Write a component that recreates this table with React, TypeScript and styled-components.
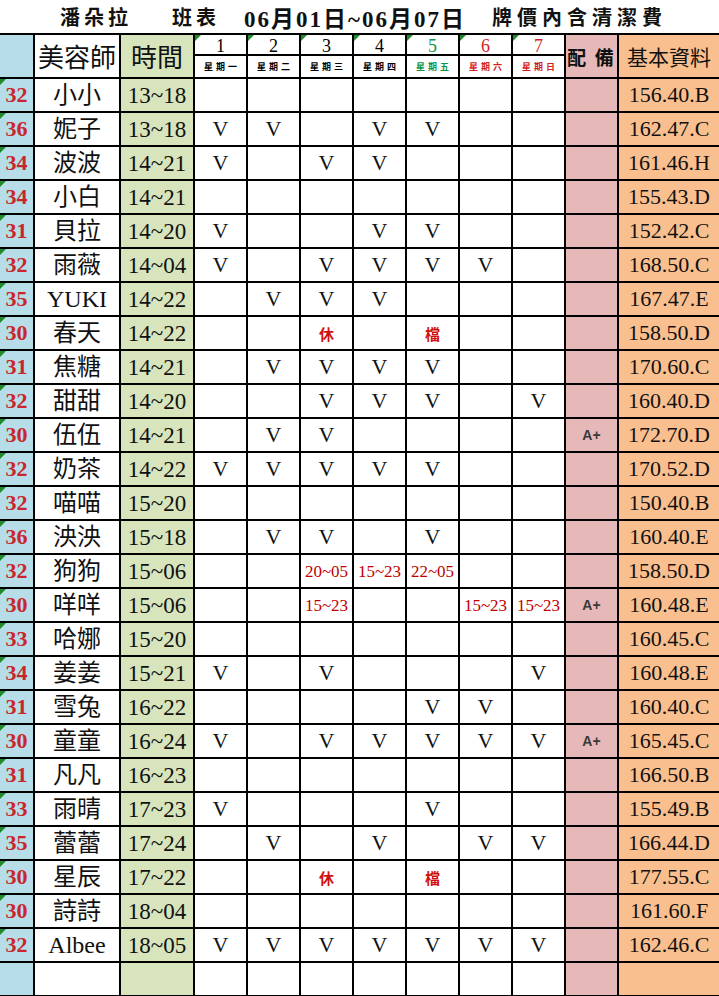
import styled, { createGlobalStyle } from 'styled-components'

const GlobalStyle = createGlobalStyle`
  body {
    margin: 0;
    background: #fff;
  }
`

const SERIF = `"Liberation Serif", "Noto Sans CJK TC", serif`
const CJK = `"Noto Sans CJK TC", sans-serif`

const BLUE = '#b7dee8'
const GREEN = '#d7e4bc'
const PINK = '#e6b9b8'
const ORANGE = '#fabf8f'
const RED = '#c8262c'

type Staff = {
  num: string
  name: string
  time: string
  days: string[]
  equip?: string
  info: string
}

const dayHeads = [
  { n: '1', w: '星期一', c: '#000' },
  { n: '2', w: '星期二', c: '#000' },
  { n: '3', w: '星期三', c: '#000' },
  { n: '4', w: '星期四', c: '#000' },
  { n: '5', w: '星期五', c: '#0b9443' },
  { n: '6', w: '星期六', c: '#d41f1f' },
  { n: '7', w: '星期日', c: '#d41f1f' },
]

const d = (s: string) => s.split(',')

const staff: Staff[] = [
  { num: '32', name: '小小', time: '13~18', days: d(',,,,,,'), info: '156.40.B' },
  { num: '36', name: '妮子', time: '13~18', days: d('V,V,,V,V,,'), info: '162.47.C' },
  { num: '34', name: '波波', time: '14~21', days: d('V,,V,V,,,'), info: '161.46.H' },
  { num: '34', name: '小白', time: '14~21', days: d(',,,,,,'), info: '155.43.D' },
  { num: '31', name: '貝拉', time: '14~20', days: d('V,,,V,V,,'), info: '152.42.C' },
  { num: '32', name: '雨薇', time: '14~04', days: d('V,,V,V,V,V,'), info: '168.50.C' },
  { num: '35', name: 'YUKI', time: '14~22', days: d(',V,V,V,,,'), info: '167.47.E' },
  { num: '30', name: '春天', time: '14~22', days: d(',,休,,檔,,'), info: '158.50.D' },
  { num: '31', name: '焦糖', time: '14~21', days: d(',V,V,V,V,,'), info: '170.60.C' },
  { num: '32', name: '甜甜', time: '14~20', days: d(',,V,V,V,,V'), info: '160.40.D' },
  { num: '30', name: '伍伍', time: '14~21', days: d(',V,V,,,,'), equip: 'A+', info: '172.70.D' },
  { num: '32', name: '奶茶', time: '14~22', days: d('V,V,V,V,V,,'), info: '170.52.D' },
  { num: '32', name: '喵喵', time: '15~20', days: d(',,,,,,'), info: '150.40.B' },
  { num: '36', name: '泱泱', time: '15~18', days: d(',V,V,,V,,'), info: '160.40.E' },
  { num: '32', name: '狗狗', time: '15~06', days: d(',,20~05,15~23,22~05,,'), info: '158.50.D' },
  { num: '30', name: '咩咩', time: '15~06', days: d(',,15~23,,,15~23,15~23'), equip: 'A+', info: '160.48.E' },
  { num: '33', name: '哈娜', time: '15~20', days: d(',,,,,,'), info: '160.45.C' },
  { num: '34', name: '姜姜', time: '15~21', days: d('V,,V,,,,V'), info: '160.48.E' },
  { num: '31', name: '雪兔', time: '16~22', days: d(',,,,V,V,'), info: '160.40.C' },
  { num: '30', name: '童童', time: '16~24', days: d('V,,V,V,V,V,V'), equip: 'A+', info: '165.45.C' },
  { num: '31', name: '凡凡', time: '16~23', days: d(',,,,,,'), info: '166.50.B' },
  { num: '33', name: '雨晴', time: '17~23', days: d('V,,,,V,,'), info: '155.49.B' },
  { num: '35', name: '蕾蕾', time: '17~24', days: d(',V,,V,,V,V'), info: '166.44.D' },
  { num: '30', name: '星辰', time: '17~22', days: d(',,休,,檔,,'), info: '177.55.C' },
  { num: '30', name: '詩詩', time: '18~04', days: d(',,,,,,'), info: '161.60.F' },
  { num: '32', name: 'Albee', time: '18~05', days: d('V,V,V,V,V,V,V'), info: '162.46.C' },
]

const markKind = (s: string) => {
  if (s === 'V') return 'check'
  if (s.includes('~')) return 'shift'
  if (s) return 'off'
  return 'empty'
}

function App() {
  return (
    <>
      <GlobalStyle />
      <Sheet>
        <Title>
          <TitleWord $ls={4}>潘朵拉</TitleWord>
          <TitleWord $ls={4} $ml={40}>班表</TitleWord>
          <TitleDate>06月01日~06月07日</TitleDate>
          <TitleWord $ls={5} $ml={26}>牌價內含清潔費</TitleWord>
        </Title>

        <HeadCell $bg={BLUE} />
        <HeadCell $size={26}>美容師</HeadCell>
        <HeadCell $bg={GREEN} $size={26}>時間</HeadCell>
        {dayHeads.map((h) => (
          <DayNum key={h.n} $color={h.c}>
            {h.n}
          </DayNum>
        ))}
        <HeadCell $bg={PINK} $size={19} $bold>
          配 備
        </HeadCell>
        <HeadCell $bg={ORANGE} $size={21}>
          基本資料
        </HeadCell>
        {dayHeads.map((h) => (
          <DayName key={h.w} $color={h.c}>
            {h.w}
          </DayName>
        ))}

        {staff.map((s, i) => (
          <Row key={i} s={s} />
        ))}

        <NumCell />
        <NameCell />
        <TimeCell />
        {dayHeads.map((h) => (
          <MarkCell key={h.n} $kind="empty" />
        ))}
        <EquipCell />
        <InfoCell />
      </Sheet>
    </>
  )
}

function Row({ s }: { s: Staff }) {
  return (
    <>
      <NumCell $flag>{s.num}</NumCell>
      <NameCell>{s.name}</NameCell>
      <TimeCell>{s.time}</TimeCell>
      {s.days.map((v, j) => (
        <MarkCell key={j} $kind={markKind(v)}>
          {v}
        </MarkCell>
      ))}
      <EquipCell>{s.equip}</EquipCell>
      <InfoCell>{s.info}</InfoCell>
    </>
  )
}

export default App

const Sheet = styled.div`
  display: grid;
  width: 719px;
  grid-template-columns: 33px 84px 72px repeat(7, 51px) 51px 100px;
  grid-template-rows: 33px 19px 21px repeat(27, 32px);
  gap: 2px;
  padding-bottom: 2px;
  background: #000;
`

const Cell = styled.div`
  position: relative;
  display: flex;
  align-items: center;
  justify-content: center;
  background: #fff;
  line-height: 1;
  white-space: nowrap;
  overflow: hidden;
`

const Flag = `
  &::before {
    content: '';
    position: absolute;
    top: 0;
    left: 0;
    border-top: 6px solid #1f8a2a;
    border-right: 6px solid transparent;
  }
`

const Title = styled.div`
  grid-column: 1 / -1;
  display: flex;
  align-items: center;
  padding-left: 60px;
  background: #fff;
  color: #111;
  font-weight: bold;
`

const TitleWord = styled.span<{ $ls: number; $ml?: number }>`
  font-family: ${CJK};
  font-size: 20px;
  letter-spacing: ${(p) => p.$ls}px;
  margin-left: ${(p) => p.$ml ?? 0}px;
`

const TitleDate = styled.span`
  margin-left: 24px;
  font-family: ${SERIF};
  font-size: 23px;
  letter-spacing: 2px;
`

const HeadCell = styled(Cell)<{ $bg?: string; $size?: number; $bold?: boolean }>`
  grid-row: span 2;
  background: ${(p) => p.$bg ?? '#fff'};
  font-family: ${CJK};
  font-size: ${(p) => p.$size ?? 20}px;
  font-weight: ${(p) => (p.$bold ? 'bold' : 'normal')};
  letter-spacing: ${(p) => (p.$bold ? 2 : 0)}px;
  color: #111;
`

const DayNum = styled(Cell)<{ $color: string }>`
  padding-top: 2px;
  font-family: ${SERIF};
  font-size: 18px;
  color: ${(p) => p.$color};
  ${Flag}
`

const DayName = styled(Cell)<{ $color: string }>`
  font-family: ${CJK};
  font-size: 9px;
  font-weight: bold;
  letter-spacing: 3px;
  padding-left: 3px;
  color: ${(p) => p.$color};
`

const NumCell = styled(Cell)<{ $flag?: boolean }>`
  background: ${BLUE};
  font-family: ${SERIF};
  font-size: 22px;
  font-weight: bold;
  color: ${RED};
  ${(p) => (p.$flag ? Flag : '')}
`

const NameCell = styled(Cell)`
  font-family: ${SERIF};
  font-size: 24px;
  color: #111;
`

const TimeCell = styled(Cell)`
  background: ${GREEN};
  font-family: ${SERIF};
  font-size: 23px;
  color: #111;
`

const markStyles: Record<string, string> = {
  check: `font-family: ${SERIF}; font-size: 22px; color: #111;`,
  shift: `font-family: ${SERIF}; font-size: 17px; color: #c00000;`,
  off: `font-family: ${CJK}; font-size: 15px; font-weight: bold; color: #d01010;`,
  empty: '',
}

const MarkCell = styled(Cell)<{ $kind: string }>`
  ${(p) => markStyles[p.$kind]}
`

const EquipCell = styled(Cell)`
  background: ${PINK};
  font-family: "Liberation Sans", sans-serif;
  font-size: 14px;
  font-weight: bold;
  color: #3a3a3a;
`

const InfoCell = styled(Cell)`
  background: ${ORANGE};
  font-family: ${SERIF};
  font-size: 22px;
  color: #111;
`
